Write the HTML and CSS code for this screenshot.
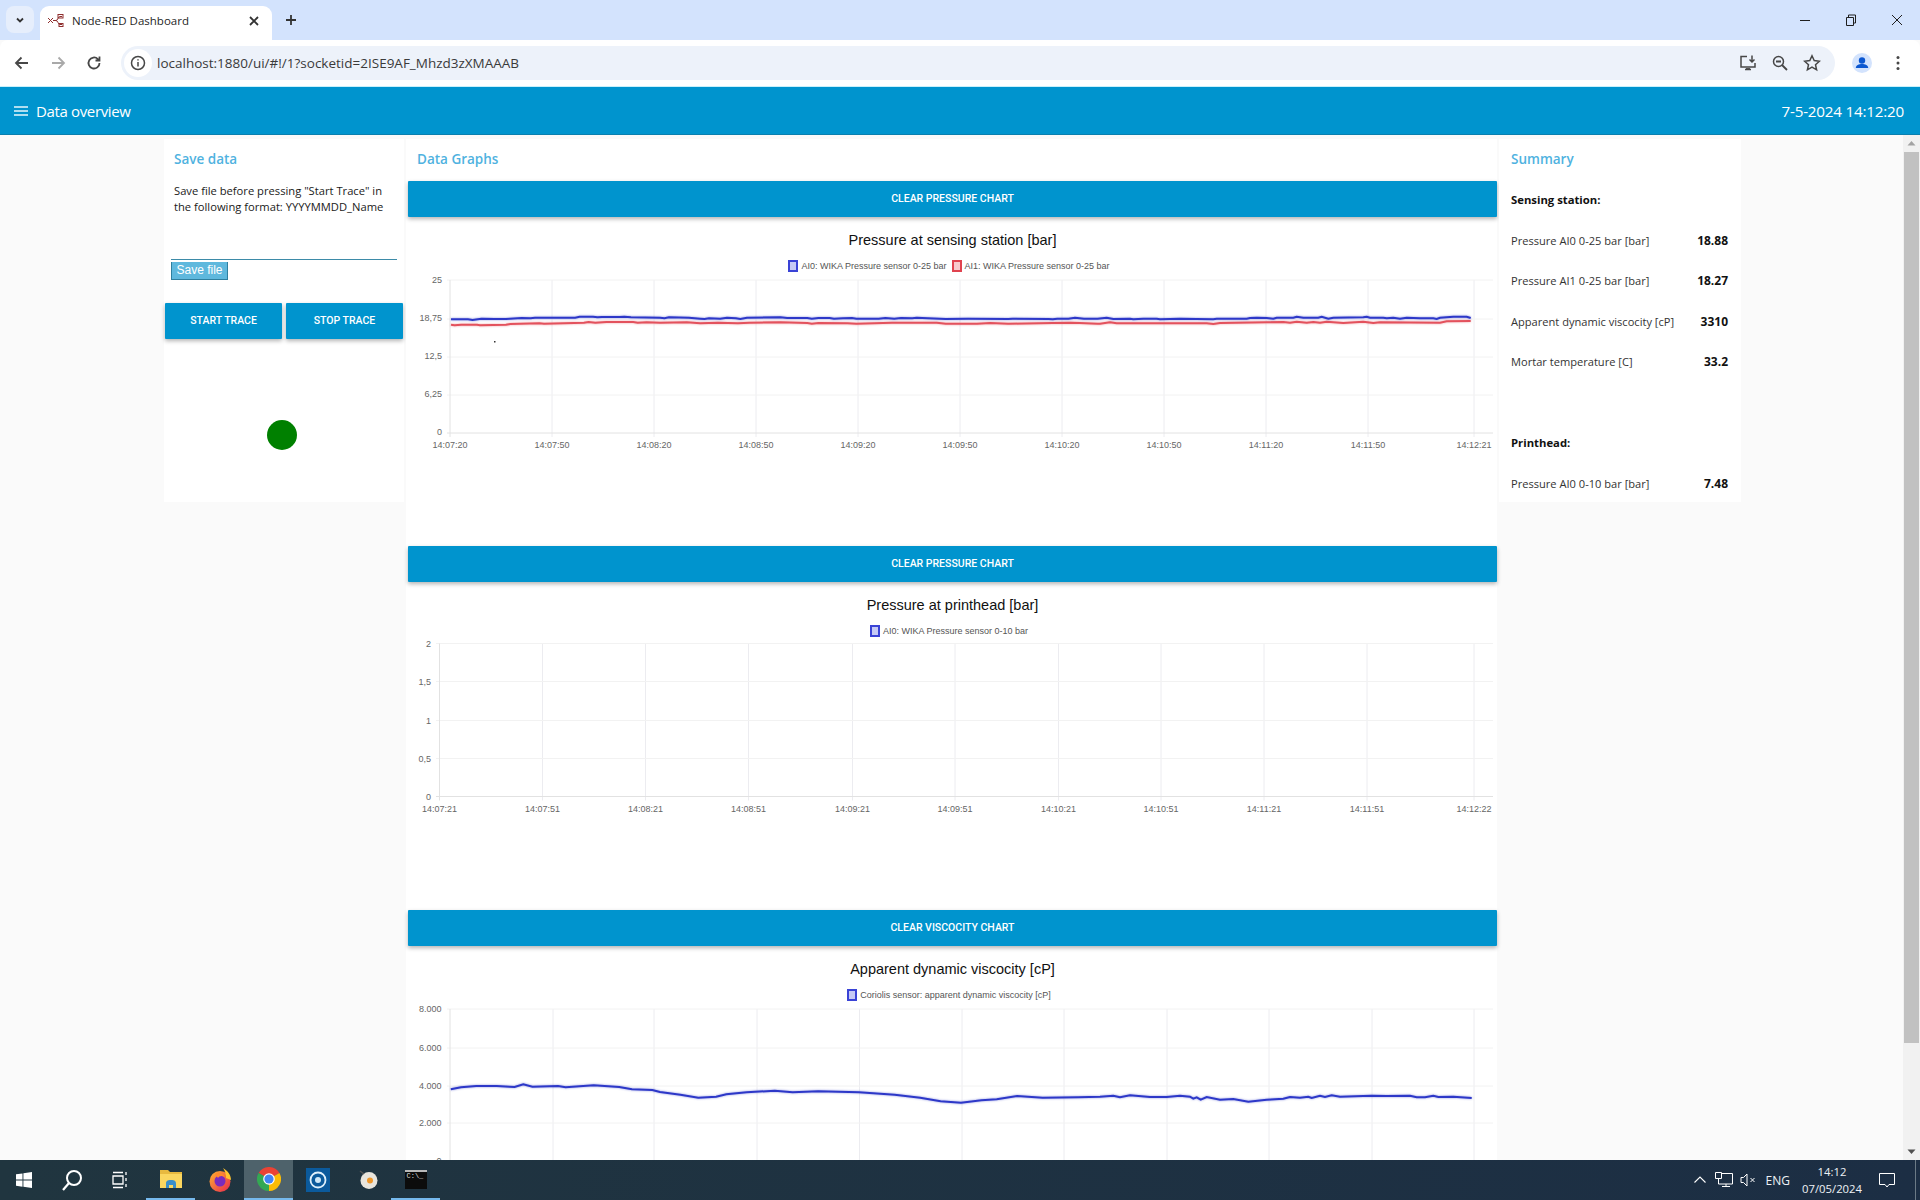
FILE: index.html
```html
<!DOCTYPE html>
<html lang="en">
<head>
    <meta charset="UTF-8">
    <meta name="viewport" content="width=device-width, initial-scale=1.0">
    <title>Node-RED Dashboard</title>
    <link rel="stylesheet" href="styles.css">
</head>
<body>
    <!-- browser tab strip -->
    <div class="tabstrip">
        <div class="tab-search">
            <svg width="12" height="12" viewBox="0 0 12 12"><path class="ic-line" d="M3 4.500l3 3 3-3"/></svg>
        </div>
        <div class="tab">
            <svg width="18" height="16" viewBox="0 0 18 16"><path class="favicon" d="M1 5l5 5M1 10l5-5M6 7.500h3c2 0 2-4 4-4h2M9 7.500c2 0 2 4 4 4h2"/><rect class="favicon" x="11" y="1.500" width="5" height="3.500"/><rect class="favicon" x="12" y="10.500" width="4" height="3"/></svg>
            <span class="tab-title">Node-RED Dashboard</span>
            <svg class="tab-close" width="10" height="10" viewBox="0 0 10 10"><path class="ic-line" d="M1 1l8 8M9 1l-8 8"/></svg>
        </div>
        <svg class="new-tab" width="12" height="12" viewBox="0 0 12 12"><path class="ic-line" d="M6 1v10M1 6h10"/></svg>
        <div class="win-controls">
            <svg width="46" height="12" viewBox="0 0 46 12"><path class="win-line" d="M18 6.500h10"/></svg>
            <svg width="46" height="12" viewBox="0 0 46 12"><path class="win-line" d="M18.500 3.500h7v8h-7zM20.500 3.500v-2.500h7v8h-2"/></svg>
            <svg width="46" height="12" viewBox="0 0 46 12"><path class="win-line" d="M18 1l10 10M28 1l-10 10"/></svg>
        </div>
    </div>

    <!-- browser toolbar -->
    <div class="toolbar">
        <div class="nav-btn"><svg width="16" height="16" viewBox="0 0 16 16"><path class="nav-line" d="M14 8H2M7.500 2.500L2 8l5.500 5.500"/></svg></div>
        <div class="nav-btn"><svg width="16" height="16" viewBox="0 0 16 16"><path class="nav-line off" d="M2 8h12M8.500 2.500L14 8l-5.500 5.500"/></svg></div>
        <div class="nav-btn"><svg width="16" height="16" viewBox="0 0 16 16"><path class="nav-line" d="M13.500 8a5.500 5.500 0 1 1-1.600-3.900L13.500 5.500M13.500 1.500v4h-4"/></svg></div>
        <div class="omnibox">
            <div class="site-info">
                <svg width="16" height="16" viewBox="0 0 16 16"><circle class="nav-line thin" cx="8" cy="8" r="6.500"/><path class="nav-line thin" d="M8 7v4.500M8 4.200v1.400"/></svg>
            </div>
            <span class="url">localhost:1880/ui/#!/1?socketid=2ISE9AF_Mhzd3zXMAAAB</span>
            <div class="omni-icons">
                <div class="omni-icon"><svg width="18" height="18" viewBox="0 0 18 18"><path class="nav-line thin" d="M8 2.500H2v10.500h14V9M13 1.500v6.500M10.500 5.500L13 8l2.500-2.500M6 15.500h6"/><path class="nav-line" d="M7 15h4"/></svg></div>
                <div class="omni-icon"><svg width="18" height="18" viewBox="0 0 18 18"><circle class="nav-line thin" cx="7.500" cy="7.500" r="5"/><path class="nav-line" d="M11 11l5 5M5 7.500h5"/></svg></div>
                <div class="omni-icon"><svg width="18" height="18" viewBox="0 0 18 18"><path class="nav-line thin" d="M9 1.800l2.200 4.800 5.200.6-3.900 3.500 1.100 5.100L9 13.200l-4.600 2.600 1.100-5.100-3.900-3.500 5.200-.6z"/></svg></div>
            </div>
        </div>
        <div class="profile-btn"><svg width="20" height="20" viewBox="0 0 20 20"><circle cx="10" cy="10" r="10" fill="#d3e3fd"/><circle cx="10" cy="7.500" r="3.200" fill="#0b57d0"/><path d="M3.800 15c0-2.600 3-4 6.200-4s6.200 1.400 6.200 4z" fill="#0b57d0"/></svg></div>
        <div class="nav-btn"><svg width="16" height="16" viewBox="0 0 16 16"><circle cx="8" cy="2.500" r="1.500" fill="#474747"/><circle cx="8" cy="8" r="1.500" fill="#474747"/><circle cx="8" cy="13.500" r="1.500" fill="#474747"/></svg></div>
    </div>

    <!-- dashboard title bar -->
    <div class="appbar">
        <svg width="14" height="12" viewBox="0 0 14 12"><path class="menu-line" d="M0 2h14M0 6h14M0 10h14"/></svg>
        <span class="appbar-title">Data overview</span>
        <span class="appbar-date">7-5-2024 14:12:20</span>
    </div>

    <div class="page">
        <div class="content">
            <!-- left group -->
            <div class="card save-card">
                <div class="group-title">Save data</div>
                <p class="save-note">Save file before pressing "Start Trace" in the following format: YYYYMMDD_Name</p>
                <div class="file-input"></div>
                <div class="save-btn">Save file</div>
                <div class="trace-btns">
                    <div class="btn">START TRACE</div>
                    <div class="btn">STOP TRACE</div>
                </div>
                <div class="led"></div>
            </div>

            <!-- charts -->
            <div class="card graphs-card">
                <div class="group-title graphs-title">Data Graphs</div>

                <div class="chart-block">
                    <div class="btn">CLEAR PRESSURE CHART</div>
                    <div class="chart-title">Pressure at sensing station [bar]</div>
                    <div class="legend">
                        <span class="swatch blue"></span><span class="legend-text">AI0: WIKA Pressure sensor 0-25 bar</span>
                        <span class="swatch red"></span><span class="legend-text">AI1: WIKA Pressure sensor 0-25 bar</span>
                    </div>
                    <svg class="chart" width="1089" height="190" viewBox="408 276 1089 190">
                        <path class="grid" d="M552 280V437M654 280V437M756 280V437M858 280V437M960 280V437M1062 280V437M1164 280V437M1266 280V437M1368 280V437M1474 280V437"/>
                        <path class="grid-h" d="M447 280H1493M447 319H1493M447 357H1493M447 395H1493"/>
                        <path class="axis" d="M450 280V437M447 433H1493"/>
                        <text class="tick end" x="442" y="283">25</text>
                        <text class="tick end" x="442" y="321">18,75</text>
                        <text class="tick end" x="442" y="359">12,5</text>
                        <text class="tick end" x="442" y="397">6,25</text>
                        <text class="tick end" x="442" y="435">0</text>
                        <text class="tick mid" x="450" y="448">14:07:20</text>
                        <text class="tick mid" x="552" y="448">14:07:50</text>
                        <text class="tick mid" x="654" y="448">14:08:20</text>
                        <text class="tick mid" x="756" y="448">14:08:50</text>
                        <text class="tick mid" x="858" y="448">14:09:20</text>
                        <text class="tick mid" x="960" y="448">14:09:50</text>
                        <text class="tick mid" x="1062" y="448">14:10:20</text>
                        <text class="tick mid" x="1164" y="448">14:10:50</text>
                        <text class="tick mid" x="1266" y="448">14:11:20</text>
                        <text class="tick mid" x="1368" y="448">14:11:50</text>
                        <text class="tick mid" x="1474" y="448">14:12:21</text>
                        <polyline class="line-red" points="451,324.7 454.6,325.3 461.3,324.7 477,324.7 480,325.3 506,324.7 510.4,324 539.5,323.3 544,323.7 584,322.7 588.6,322 595.3,322.7 606.4,322 633.2,322 637.7,322.7 646.6,322.3 660,322.7 686.8,322.3 700.2,323.3 718,322.7 738,323.3 749.3,322.7 780.5,322.3 807.3,323 811.8,323.7 818.5,323 847.5,323.3 856.4,323.7 892,322.7 936.8,322.7 945.7,323.7 977,323.7 990.3,323 1008.2,323.7 1052.8,323 1070.7,322.7 1079.6,323 1097.5,323.7 1100,323.7 1110,322.3 1116.7,323.3 1206.7,323.3 1213.3,324 1220,323 1266.7,322.3 1283.3,322 1290,322.7 1296.7,321.7 1306.7,322.7 1313.3,322 1320,322.7 1326.7,321.7 1343.3,323 1363.3,321.7 1373.3,323 1380,322.3 1440,322.7 1446.7,321.3 1470.7,321"/>
                        <polyline class="line-blue" points="451,319.3 468,319.3 472.5,320 481.4,318.7 494.8,319 506,319 521.6,318 530.5,318.3 535,317.7 575.2,317.7 579.6,316.7 593,316.7 597.5,317.3 602,317 619.8,317 624.3,316.7 631,317.3 660,317.7 664.5,318.3 669,317.3 689,317.7 700.2,318.7 704.6,319 709,318.3 720.2,318.7 727,317.7 735.9,318.3 740.3,319 747,317.7 780.5,317.3 787.2,318 807.3,318 811.8,318.7 818.5,318 829.6,318 834,318.7 843,318.3 852,318 856.4,318.7 878.7,318.7 885.4,318 894.3,318.7 901,318 912.2,318.3 916.7,317.7 927.8,318.3 945.7,319 968,318.7 1008.2,319 1012.6,318.7 1048.4,319 1052.8,319.3 1057.3,318.7 1068.4,318.7 1075,317.7 1084,318.7 1097.5,318.7 1106.7,317.7 1113.3,319 1130,318.7 1133.3,319.3 1143.3,318.7 1156.7,318.7 1160,319.3 1180,318.7 1213.3,319.3 1216.7,318.7 1246.7,318.7 1250,318 1256.7,317.7 1266.7,318 1273.3,318.7 1276.7,317.7 1293.3,317.7 1296.7,316.7 1303.3,317.7 1318.3,317.7 1321.7,316.7 1328.3,318.7 1333.3,317.7 1363.3,317.3 1366.7,316.7 1370,317.7 1383.3,317.7 1386.7,318.3 1393.3,317.7 1400,318.7 1406.7,317.7 1420,318.3 1433.3,318.3 1436.7,319 1440,317.7 1453.3,316.7 1466.7,316.7 1470.7,318"/>
                        <rect x="494" y="341" width="1.500" height="1.500" fill="#333"/>
                    </svg>
                </div>

                <div class="chart-block">
                    <div class="btn">CLEAR PRESSURE CHART</div>
                    <div class="chart-title">Pressure at printhead [bar]</div>
                    <div class="legend">
                        <span class="swatch blue"></span><span class="legend-text">AI0: WIKA Pressure sensor 0-10 bar</span>
                    </div>
                    <svg class="chart" width="1089" height="190" viewBox="408 640.500 1089 190">
                        <path class="grid" d="M542.500 643V800M645.500 643V800M748.500 643V800M852.500 643V800M955 643V800M1058.500 643V800M1161 643V800M1264 643V800M1367 643V800M1474 643V800"/>
                        <path class="grid-h" d="M436 643H1493M436 681H1493M436 720H1493M436 758H1493"/>
                        <path class="axis" d="M439.500 643V800M436 796H1493"/>
                        <text class="tick end" x="431" y="646">2</text>
                        <text class="tick end" x="431" y="684">1,5</text>
                        <text class="tick end" x="431" y="723">1</text>
                        <text class="tick end" x="431" y="761">0,5</text>
                        <text class="tick end" x="431" y="799">0</text>
                        <text class="tick mid" x="439.500" y="811">14:07:21</text>
                        <text class="tick mid" x="542.500" y="811">14:07:51</text>
                        <text class="tick mid" x="645.500" y="811">14:08:21</text>
                        <text class="tick mid" x="748.500" y="811">14:08:51</text>
                        <text class="tick mid" x="852.500" y="811">14:09:21</text>
                        <text class="tick mid" x="955" y="811">14:09:51</text>
                        <text class="tick mid" x="1058.500" y="811">14:10:21</text>
                        <text class="tick mid" x="1161" y="811">14:10:51</text>
                        <text class="tick mid" x="1264" y="811">14:11:21</text>
                        <text class="tick mid" x="1367" y="811">14:11:51</text>
                        <text class="tick mid" x="1474" y="811">14:12:22</text>
                    </svg>
                </div>

                <div class="chart-block">
                    <div class="btn">CLEAR VISCOCITY CHART</div>
                    <div class="chart-title">Apparent dynamic viscocity [cP]</div>
                    <div class="legend">
                        <span class="swatch blue"></span><span class="legend-text">Coriolis sensor: apparent dynamic viscocity [cP]</span>
                    </div>
                    <svg class="chart" width="1089" height="190" viewBox="408 1005 1089 190">
                        <path class="grid" d="M553 1009V1170M654 1009V1170M757 1009V1170M859.500 1009V1170M962 1009V1170M1064 1009V1170M1167 1009V1170M1269 1009V1170M1372 1009V1170M1474 1009V1170"/>
                        <path class="grid-h" d="M447 1009H1493M447 1048H1493M447 1086H1493M447 1123H1493"/>
                        <path class="axis" d="M450 1009V1170M447 1161H1493"/>
                        <text class="tick end" x="441.500" y="1012">8.000</text>
                        <text class="tick end" x="441.500" y="1051">6.000</text>
                        <text class="tick end" x="441.500" y="1089">4.000</text>
                        <text class="tick end" x="441.500" y="1126">2.000</text>
                        <text class="tick end" x="441.500" y="1164">0</text>
                        <polyline class="line-blue" points="450.8,1089.3 461,1087.3 476.3,1086 496.7,1086 514.6,1087 523.3,1084.3 532.4,1086.7 558,1086 565.6,1087.3 593.7,1085.3 619.2,1087 632,1089.3 652.3,1090 660,1092 680.4,1094.7 698.3,1097.7 716.1,1096.7 726.3,1094.3 746.7,1092.3 774.8,1090.7 792.7,1092.3 818.2,1091.3 859,1092.3 894.7,1094.7 920.2,1097.7 940.6,1101.3 961,1102.7 981.4,1100.3 996.7,1099.3 1017.1,1096 1042.7,1097.7 1078.4,1097.3 1100,1096.7 1113.3,1095.7 1120,1097.3 1130,1095.3 1150,1097 1166.7,1097 1180,1095.7 1190,1096.7 1193.3,1098.7 1196.7,1097.3 1200.7,1099.7 1206.7,1097 1220,1099.7 1233.3,1099 1248.3,1101.7 1266.7,1099.7 1283.3,1098.7 1290,1097 1300,1097.7 1308.3,1096.7 1311.7,1098 1320,1095.7 1325,1097 1331.7,1095.3 1340,1096.7 1363.3,1096 1371.7,1095.7 1386.7,1096 1410,1095.7 1416.7,1097.3 1425,1097.3 1433.3,1095.7 1438.3,1097 1453.3,1096.7 1471.7,1098"/>
                    </svg>
                </div>
            </div>

            <!-- right group -->
            <div class="card summary-card">
                <div class="sum-row group-title">Summary</div>
                <div class="sum-row sum-head">Sensing station:</div>
                <div class="sum-row"><span>Pressure AI0 0-25 bar [bar]</span><b>18.88</b></div>
                <div class="sum-row"><span>Pressure AI1 0-25 bar [bar]</span><b>18.27</b></div>
                <div class="sum-row"><span>Apparent dynamic viscocity [cP]</span><b>3310</b></div>
                <div class="sum-row"><span>Mortar temperature [C]</span><b>33.2</b></div>
                <div class="sum-row"></div>
                <div class="sum-row sum-head">Printhead:</div>
                <div class="sum-row"><span>Pressure AI0 0-10 bar [bar]</span><b>7.48</b></div>
            </div>
        </div>

        <div class="scrollbar">
            <svg width="17" height="17" viewBox="0 0 17 17"><path d="M4.500 10.500L8.500 6l4 4.500z" fill="#a3a3a3"/></svg>
            <div class="scroll-thumb"></div>
            <svg class="scroll-down" width="17" height="17" viewBox="0 0 17 17"><path d="M4.500 6.500L8.500 11l4-4.500z" fill="#505050"/></svg>
        </div>
    </div>

    <!-- windows taskbar -->
    <div class="taskbar">
        <div class="task-item"><svg width="16" height="16" viewBox="0 0 16 16"><path fill="#fff" d="M0 2.300l6.500-.9v6.200H0zM7.400 1.300L16 0v7.600H7.400zM0 8.500h6.500v6.200L0 13.800zM7.400 8.500H16V16l-8.600-1.200z"/></svg></div>
        <div class="task-item"><svg width="22" height="22" viewBox="0 0 22 22"><circle cx="13" cy="9" r="7" fill="none" stroke="#fff" stroke-width="2"/><path d="M8 14l-6 7" stroke="#fff" stroke-width="2.200" fill="none"/></svg></div>
        <div class="task-item"><svg width="16" height="18" viewBox="0 0 16 18"><path fill="none" stroke="#fff" stroke-width="1.300" d="M1 5h10v8H1zM1 1.500h10M1 16.500h10M14 1v3M14 7v3M14 13v3"/></svg></div>
        <div class="task-item app first running"><svg width="22" height="20" viewBox="0 0 22 20"><path fill="#e8b93f" d="M0 1h8l2 2h12v3H0z"/><path fill="#fbd65f" d="M0 5h22v14H0z"/><path fill="#3a8ec9" d="M6 15c0-3 1-4 5-4s5 1 5 4v4h-3v-3H9v3H6z"/></svg></div>
        <div class="task-item app"><svg width="24" height="24" viewBox="0 0 24 24"><defs><linearGradient id="fx" x1="0" y1="0" x2="1" y2="1"><stop offset="0" stop-color="#ffb52e"/><stop offset="1" stop-color="#e8264f"/></linearGradient></defs><circle cx="12" cy="13.500" r="10.500" fill="url(#fx)"/><path d="M15 0c5 3 8 7 8 12l-5-2c0-4-1-7-3-10z" fill="#ffc42e"/><circle cx="12" cy="13" r="5.500" fill="#7a2bbd"/><path d="M7 6c3-2 8-1 10 3-3-2-6-1-7 1z" fill="#ff8a2b"/></svg></div>
        <div class="task-item app running active"><svg width="24" height="24" viewBox="0 0 24 24"><path fill="#ea4335" d="M12 12L1.600 6A12 12 0 0 1 22.400 6z"/><path fill="#fbbc04" d="M12 12L22.400 6A12 12 0 0 1 12 24z"/><path fill="#34a853" d="M12 12V24A12 12 0 0 1 1.600 6z"/><circle cx="12" cy="12" r="5.800" fill="#fff"/><circle cx="12" cy="12" r="4.600" fill="#4285f4"/></svg></div>
        <div class="task-item app"><svg width="24" height="24" viewBox="0 0 24 24"><rect width="24" height="24" fill="#0b5a9c"/><circle cx="12" cy="12" r="7.500" fill="none" stroke="#dff0fb" stroke-width="1.800"/><circle cx="12" cy="12" r="3" fill="#cfe8f8"/></svg></div>
        <div class="task-item app"><svg class="ball-icon" width="20" height="20" viewBox="0 0 20 20"><circle cx="10" cy="10.500" r="8.500" fill="#e9e5dc"/><circle cx="11" cy="10.500" r="3" fill="#f0982a"/><path d="M1 1l4 3" stroke="#555" stroke-width="1.500"/></svg></div>
        <div class="task-item app running">
            <div class="cmd-icon"><span class="cmd-text">C:\_</span></div>
        </div>
        <div class="tray">
            <div class="tray-item"><svg width="14" height="14" viewBox="0 0 14 14"><path fill="none" stroke="#fff" stroke-width="1.100" d="M1.500 9.500L7 4l5.500 5.500"/></svg></div>
            <div class="tray-item"><svg width="18" height="16" viewBox="0 0 18 16"><path fill="none" stroke="#fff" d="M.5.500h6v6h-6zM3.500 6.500V12h14V1.500h-11M7 14.500h8M11 12v2.500"/></svg></div>
            <div class="tray-item"><svg width="16" height="14" viewBox="0 0 16 14"><path fill="none" stroke="#fff" d="M1 4.500h2.500L7 1v12L3.500 9.500H1zM10.500 5l4 4M14.500 5l-4 4"/></svg></div>
            <div class="tray-lang">ENG</div>
            <div class="tray-clock"><div>14:12</div><div>07/05/2024</div></div>
            <div class="tray-note"><svg width="16" height="15" viewBox="0 0 16 15"><path fill="none" stroke="#fff" d="M.5.500h15v11H10L8 14l-2-2.500H.5z"/></svg></div>
            <div class="show-desktop"></div>
        </div>
    </div>
</body>
</html>
```
FILE: styles.css
```css
html, body {
    margin: 0;
    height: 100%;
    overflow: hidden;
}
body {
    display: flex;
    flex-direction: column;
    width: 1920px;
    height: 1200px;
    background: #fafafa;
    font-family: "Open Sans", "Liberation Sans", sans-serif;
}

/* browser chrome */
.tabstrip {
    display: flex;
    align-items: flex-end;
    flex: 0 0 40px;
    padding-left: 6px;
    background: #d3e3fd;
    box-sizing: border-box;
}
.tab-search {
    display: flex;
    align-items: center;
    justify-content: center;
    width: 28px;
    height: 27px;
    margin: 0 6px 7px 0;
    background: #e6eefc;
    border-radius: 8px;
}
.tab {
    display: flex;
    align-items: center;
    width: 232px;
    height: 34px;
    padding: 0 13px 5px 7px;
    box-sizing: border-box;
    background: #fff;
    border-radius: 9px 9px 0 0;
    font-size: 11.500px;
    color: #1f1f1f;
}
.tab-title {
    margin-left: 7px;
    flex: 1;
}
.favicon {
    fill: none;
    stroke: #8f2f2f;
    stroke-width: 1;
}
.ic-line {
    fill: none;
    stroke: #333;
    stroke-width: 1.800;
}
.new-tab {
    margin: 0 0 14px 13px;
}
.win-controls {
    display: flex;
    margin: 0 0 14px auto;
    padding-right: 0;
}
.win-line {
    fill: none;
    stroke: #1f1f1f;
    stroke-width: 1;
}
.toolbar {
    display: flex;
    align-items: center;
    flex: 0 0 46px;
    padding: 0 4px;
    box-sizing: border-box;
    background: #fff;
    border-radius: 8px 8px 0 0;
}
.nav-btn {
    display: flex;
    align-items: center;
    justify-content: center;
    width: 36px;
    height: 34px;
}
.nav-line {
    fill: none;
    stroke: #474747;
    stroke-width: 1.800;
}
.nav-line.off {
    stroke: #a9a9a9;
}
.nav-line.thin {
    stroke-width: 1.500;
}
.omnibox {
    display: flex;
    align-items: center;
    width: 1714px;
    height: 34px;
    margin: 0 9px;
    padding: 0 7px 0 3px;
    box-sizing: border-box;
    background: #edf2fa;
    border-radius: 17px;
}
.site-info {
    display: flex;
    align-items: center;
    justify-content: center;
    width: 28px;
    height: 28px;
    margin-right: 5px;
    background: #fff;
    border-radius: 50%;
}
.url {
    font-size: 13.500px;
    color: #3a3a3a;
}
.omni-icons {
    display: flex;
    margin-left: auto;
}
.omni-icon {
    display: flex;
    justify-content: center;
    width: 32px;
}
.profile-btn {
    display: flex;
    align-items: center;
    justify-content: center;
    width: 36px;
    height: 34px;
}

/* dashboard */
.appbar {
    display: flex;
    align-items: center;
    flex: 0 0 49px;
    padding: 0 16px 0 14px;
    box-sizing: border-box;
    background: #0094ce;
    color: #fff;
    border-top: 1px solid #c9f0fb;
    border-bottom: 1px solid #0a7fae;
}
.menu-line {
    stroke: #e8f6fc;
    stroke-width: 1.500;
    fill: none;
}
.appbar-title {
    margin-left: 8px;
    font-size: 15px;
    letter-spacing: -0.350px;
}
.appbar-date {
    margin-left: auto;
    font-size: 15.200px;
    letter-spacing: -0.2px;
}
.page {
    display: flex;
    flex: 1;
    min-height: 0;
}
.content {
    display: flex;
    align-items: flex-start;
    flex: 1;
    gap: 2px;
    padding: 4px 0 0 164px;
    overflow: hidden;
}
.card {
    background: #fff;
    box-sizing: border-box;
}
.group-title {
    font-size: 13.500px;
    font-weight: 600;
    color: #4fb2e0;
}
.save-card {
    flex: 0 0 240px;
    height: 363px;
    padding: 0 1px;
}
.save-card .group-title {
    padding: 11px 9px 0;
    line-height: 18px;
}
.save-note {
    margin: 15px 9px 0;
    font-size: 11.200px;
    line-height: 16px;
    color: #1a1a1a;
}
.file-input {
    height: 0;
    margin: 44px 6px 0;
    border-bottom: 1px solid #3d8ba8;
}
.save-btn {
    width: 55px;
    height: 17px;
    margin: 2px 0 0 6px;
    background: #5fb8dd;
    border: 1px solid #2f7f9f;
    border-width: 0 1px 1px 1px;
    color: #fff;
    font-family: "Liberation Sans", Arial, sans-serif;
    font-size: 12px;
    line-height: 17px;
    text-align: center;
}
.trace-btns {
    display: flex;
    gap: 4px;
    margin-top: 23px;
}
.trace-btns .btn {
    flex: 1;
}
.btn {
    height: 36px;
    background: #0094ce;
    color: #fff;
    font-family: Roboto, "Liberation Sans", sans-serif;
    font-size: 10.500px;
    font-weight: 500;
    line-height: 36px;
    text-align: center;
    border-radius: 1px;
    box-shadow: 0 2px 4px rgba(0,0,0,0.3);
}
.led {
    width: 30px;
    height: 30px;
    margin: 81px 0 0 102px;
    background: #008000;
    border-radius: 50%;
}
.graphs-card {
    flex: 0 0 1091px;
    height: 1030px;
    padding: 0 0 0 2px;
}
.graphs-title {
    padding-left: 9px;
    height: 42px;
    line-height: 40px;
}
.chart-block {
    height: 364.500px;
}
.chart-title {
    margin-top: 13px;
    font-family: "Liberation Sans", Arial, sans-serif;
    font-size: 14.500px;
    line-height: 20px;
    text-align: center;
    color: #111;
}
.legend {
    display: flex;
    align-items: center;
    justify-content: center;
    height: 20px;
    margin-top: 6px;
    padding-right: 7px;
    font-family: "Liberation Sans", Arial, sans-serif;
    font-size: 9px;
    color: #555;
}
.swatch {
    width: 6px;
    height: 8px;
    margin-right: 3px;
    border: 2px solid;
}
.swatch.blue {
    border-color: #3a43d6;
    background: #c6caf5;
}
.swatch.red {
    border-color: #e0434f;
    background: #f8c9cc;
    margin-left: 5px;
}
.chart {
    display: block;
    overflow: visible;
}
.grid {
    stroke: #ececf0;
    stroke-width: 1;
    fill: none;
}
.grid-h {
    stroke: #f2f2f2;
    stroke-width: 1;
    fill: none;
}
.axis {
    stroke: #e2e2e2;
    stroke-width: 1;
    fill: none;
}
.tick {
    font-family: "Liberation Sans", Arial, sans-serif;
    font-size: 9px;
    fill: #666;
}
.tick.end {
    text-anchor: end;
}
.tick.mid {
    text-anchor: middle;
}
.line-blue {
    fill: none;
    stroke: #2d38c8;
    stroke-width: 2;
    filter: drop-shadow(0 0 1px rgba(45,56,200,0.5));
}
.line-red {
    fill: none;
    stroke: #e3525d;
    stroke-width: 2;
    filter: drop-shadow(0 0 1px rgba(227,82,93,0.5));
}
.summary-card {
    flex: 0 0 242px;
    height: 363px;
    padding: 0 13px 0 12px;
    font-size: 11.100px;
    color: #333;
}
.sum-row {
    display: flex;
    align-items: center;
    justify-content: space-between;
    height: 40.500px;
}
.sum-row b {
    font-size: 12px;
    font-weight: 700;
    color: #111;
}
.sum-head {
    font-size: 11.300px;
    font-weight: 700;
    color: #111;
}

/* scrollbar */
.scrollbar {
    display: flex;
    flex-direction: column;
    flex: 0 0 17px;
    background: #f1f1f1;
}
.scroll-thumb {
    width: 15px;
    height: 891px;
    margin-left: 1px;
    background: #c1c1c1;
}
.scroll-down {
    margin-top: auto;
}

/* windows taskbar */
.taskbar {
    display: flex;
    flex: 0 0 40px;
    background: linear-gradient(90deg, #20353f, #1c2e44);
}
.task-item {
    display: flex;
    align-items: center;
    justify-content: center;
    width: 48px;
    box-sizing: border-box;
}
.task-item.app {
    width: 49px;
}
.task-item.first {
    margin-left: 2px;
}
.ball-icon {
    margin-left: 4px;
}
.running {
    border-bottom: 2px solid #76b9ed;
}
.active {
    background: #4e626b;
}
.cmd-icon {
    width: 22px;
    height: 19px;
    box-sizing: border-box;
    background: #0c0c0c;
    border-top: 2px solid #b9b9b9;
    overflow: hidden;
}
.cmd-text {
    display: block;
    padding-left: 2px;
    color: #ddd;
    font-family: "Liberation Mono", monospace;
    font-size: 7px;
    line-height: 9px;
}
.tray {
    display: flex;
    align-items: center;
    margin-left: auto;
    color: #eef2f5;
}
.tray-item {
    display: flex;
    justify-content: center;
    width: 24px;
}
.tray-lang {
    width: 33px;
    margin-left: 1px;
    padding-right: 4px;
    box-sizing: border-box;
    font-size: 12px;
    text-align: right;
}
.tray-clock {
    width: 76px;
    font-size: 11.300px;
    line-height: 17px;
    text-align: center;
}
.tray-note {
    display: flex;
    justify-content: center;
    width: 34px;
}
.show-desktop {
    width: 4px;
    height: 40px;
    margin-left: 11px;
    border-left: 1px solid #6b7a86;
}
```
